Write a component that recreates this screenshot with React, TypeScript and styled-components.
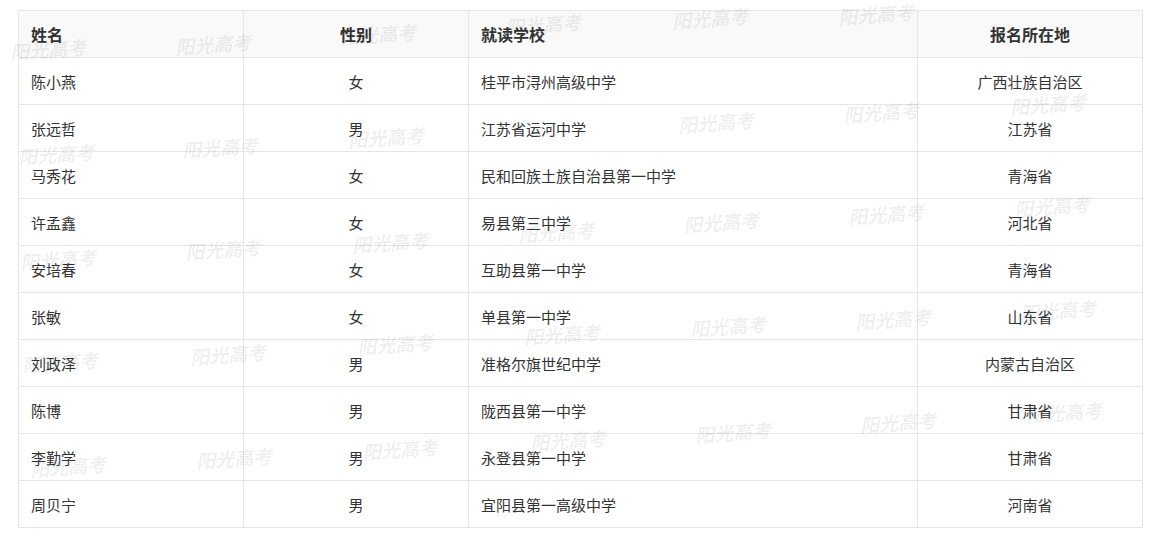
import React from 'react';
import styled, { createGlobalStyle } from 'styled-components';

const Global = createGlobalStyle`
  body { margin: 0; background: #fff; font-family: "Noto Sans CJK SC", "Liberation Sans", sans-serif; }
`;

const Page = styled.div`
  position: relative;
  padding: 10px 19px 0 18px;
  overflow: hidden;
  height: 547px;
  box-sizing: border-box;
`;

const Table = styled.table`
  width: 100%;
  border-collapse: collapse;
  table-layout: fixed;
  font-size: 15px;
  color: #333;
`;

const Th = styled.th<{ center?: boolean }>`
  height: 46px;
  background: #f9f9f9;
  border: 1px solid #e6e6e6;
  font-weight: bold;
  font-size: 16px;
  text-align: ${p => (p.center ? 'center' : 'left')};
  padding: 0 12px;
`;

const Td = styled.td<{ center?: boolean }>`
  height: 46px;
  border: 1px solid #e6e6e6;
  text-align: ${p => (p.center ? 'center' : 'left')};
  padding: 0 12px;
`;

const Mark = styled.span`
  position: absolute;
  font-family: "Liberation Serif", "Noto Sans CJK SC", serif;
  font-weight: bold;
  font-style: italic;
  font-size: 19px;
  color: rgba(0, 0, 0, 0.07);
  transform: rotate(-4deg);
  pointer-events: none;
  white-space: nowrap;
`;

const rows = [
  ['陈小燕', '女', '桂平市浔州高级中学', '广西壮族自治区'],
  ['张远哲', '男', '江苏省运河中学', '江苏省'],
  ['马秀花', '女', '民和回族土族自治县第一中学', '青海省'],
  ['许孟鑫', '女', '易县第三中学', '河北省'],
  ['安培春', '女', '互助县第一中学', '青海省'],
  ['张敏', '女', '单县第一中学', '山东省'],
  ['刘政泽', '男', '准格尔旗世纪中学', '内蒙古自治区'],
  ['陈博', '男', '陇西县第一中学', '甘肃省'],
  ['李勤学', '男', '永登县第一中学', '甘肃省'],
  ['周贝宁', '男', '宜阳县第一高级中学', '河南省'],
];

const marks: [number, number][] = [
  [10, 35], [175, 30], [340, 20], [505, 10], [672, 4], [838, 0],
  [18, 140], [182, 133], [348, 123], [678, 108], [843, 98], [1010, 90],
  [20, 245], [185, 235], [352, 228], [518, 218], [683, 208], [848, 200], [1014, 192],
  [22, 348], [190, 340], [357, 330], [524, 320], [690, 312], [855, 305], [1020, 296],
  [30, 452], [196, 444], [362, 435], [530, 426], [695, 418], [860, 408], [1026, 398],
];

export default function App() {
  return (
    <Page>
      <Global />
      <Table>
        <colgroup>
          <col style={{ width: 225 }} />
          <col style={{ width: 225 }} />
          <col style={{ width: 449 }} />
          <col style={{ width: 225 }} />
        </colgroup>
        <thead>
          <tr>
            <Th>姓名</Th>
            <Th center>性别</Th>
            <Th>就读学校</Th>
            <Th center>报名所在地</Th>
          </tr>
        </thead>
        <tbody>
          {rows.map(r => (
            <tr key={r[0]}>
              <Td>{r[0]}</Td>
              <Td center>{r[1]}</Td>
              <Td>{r[2]}</Td>
              <Td center>{r[3]}</Td>
            </tr>
          ))}
        </tbody>
      </Table>
      {marks.map(([x, y], i) => (
        <Mark key={i} style={{ left: x, top: y }}>阳光高考</Mark>
      ))}
    </Page>
  );
}
